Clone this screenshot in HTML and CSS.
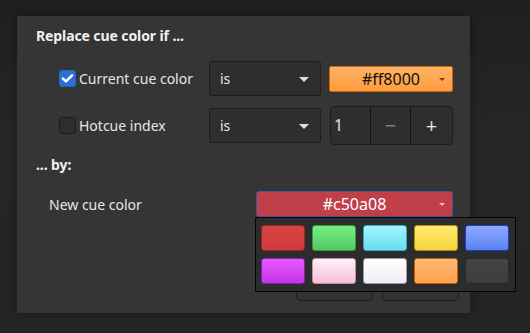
FILE: index.html
```html
<!DOCTYPE html>
<html>
<head>
<meta charset="utf-8">
<link rel="stylesheet" href="styles.css">
</head>
<body>
<div class="dialog">
  <div class="heading">Replace cue color if ...</div>
  <div class="cond">
    <div class="row">
      <label class="check"><span class="box on"><svg width="13" height="11" viewBox="0 0 13 11"><path d="M2 5.6 L5 8.4 L11 2.4" fill="none" stroke="#fff" stroke-width="2.6" stroke-linecap="round" stroke-linejoin="round"/></svg></span>Current cue color</label>
      <div class="combo">is<span class="arrow"></span></div>
      <div class="colorbtn orange">#ff8000<span class="sarrow"></span></div>
    </div>
    <div class="row">
      <label class="check"><span class="box"></span>Hotcue index</label>
      <div class="combo">is<span class="arrow"></span></div>
      <div class="spin"><span class="val">1</span><span class="sb minus">−</span><span class="sb plus">+</span></div>
    </div>
  </div>
  <div class="heading by">... by:</div>
  <div class="newrow">
    <span class="lbl">New cue color</span>
    <div class="picker">
      <div class="colorbtn red">#c50a08<span class="sarrow light"></span></div>
      <div class="popup">
        <span class="sw c1"></span><span class="sw c2"></span><span class="sw c3"></span><span class="sw c4"></span><span class="sw c5"></span>
        <span class="sw c6"></span><span class="sw c7"></span><span class="sw c8"></span><span class="sw c9"></span><span class="sw c10"></span>
      </div>
    </div>
  </div>
  <div class="footer"><span class="btn"></span><span class="btn"></span></div>
</div>
</body>
</html>
```

FILE: styles.css
```css
html, body { margin: 0; padding: 0; }
body {
  width: 530px; height: 333px; overflow: hidden;
  background: linear-gradient(#1f1f1f, #262626 40%, #242424);
  font-family: "Noto Sans", "Open Sans", sans-serif;
  color: #e6e6e6;
}
.dialog {
  position: relative;
  margin: 16px 0 0 17px;
  width: 453px; height: 297px;
  box-sizing: border-box;
  background: #353535;
  box-shadow: 0 0 10px rgba(0,0,0,.35);
  padding: 8px 17px 0 19px;
}
.heading { font-size: 14px; font-weight: 700; line-height: 24px; height: 24px; color: #f0f0f0; letter-spacing: -0.1px; }
.cond { display: flex; flex-direction: column; gap: 10px; margin: 13px 0 0 23px; }
.row { display: grid; grid-template-columns: 142px 112px 124px; column-gap: 8px; align-items: center; height: 35px; }
.check { display: flex; align-items: center; font-size: 14px; gap: 3px; }
.box {
  width: 17px; height: 17px; box-sizing: border-box; border-radius: 3px;
  border: 1px solid #1b1b1b; background: #2d2d2d;
  display: flex; align-items: center; justify-content: center;
}
.box.on { background: #2a6fd6; border-color: #2a63b8; }
.combo {
  position: relative; height: 35px; box-sizing: border-box;
  border: 1px solid #1d1d1d; border-radius: 3px; background: #2e2e2e;
  font-size: 14px; line-height: 33px; padding-left: 10px;
}
.arrow {
  position: absolute; right: 11px; top: 15px;
  width: 0; height: 0;
  border-left: 5px solid transparent; border-right: 5px solid transparent;
  border-top: 5px solid #e0e0e0;
}
.colorbtn {
  position: relative; height: 26px; box-sizing: border-box; border-radius: 2px;
  text-align: center; font-size: 16px; line-height: 24px;
}
.orange {
  background: linear-gradient(#ffb366, #ff9b3c);
  border: 1px solid #c9680e; color: #111;
}
.sarrow {
  position: absolute; right: 7px; top: 11px; width: 0; height: 0;
  border-left: 3px solid transparent; border-right: 3px solid transparent;
  border-top: 3px solid #6b4521;
}
.sarrow.light { border-top-color: #f0c0c4; }
.spin {
  justify-self: end; width: 123px; height: 39px; box-sizing: border-box;
  border: 1px solid #1d1d1d; border-radius: 4px; background: #2e2e2e;
  display: grid; grid-template-columns: 39px 40px 1fr;
  font-size: 16px; line-height: 37px;
}
.val { padding-left: 3px; color: #e4e4e4; }
.sb { border-left: 1px solid #141414; text-align: center; font-size: 20px; }
.minus { color: #7d7d7d; }
.plus { color: #e4e4e4; }
.by { margin-top: 12px; }
.newrow { display: flex; align-items: center; margin-top: 14px; padding-left: 13px; }
.lbl { font-size: 14px; width: 207px; }
.picker { position: relative; width: 197px; }
.red {
  background: #c03f49; border: 1px solid #3d5a94; color: #fff; border-radius: 3px;
}
.popup {
  position: absolute; left: -1px; top: 26px; z-index: 2;
  width: 261px; box-sizing: border-box;
  background: #2c2c2c; border: 1px solid #050505;
  padding: 7px 6px 7px 5px;
  display: grid; grid-template-columns: repeat(5, 44px); gap: 7px;
}
.sw { height: 26px; box-sizing: border-box; border-radius: 3px; border: 1px solid; }
.c1 { background: linear-gradient(#d84444, #d03a3a); border-color: #9a2424; }
.c2 { background: linear-gradient(#74f082, #54c862); border-color: #389a46; }
.c3 { background: linear-gradient(#a0f4ff, #68dcf2); border-color: #36a8c2; }
.c4 { background: linear-gradient(#ffe870, #f6d43a); border-color: #b0920c; }
.c5 { background: linear-gradient(#8eaaff, #5a82f6); border-color: #1f3fc0; }
.c6 { background: linear-gradient(#e458ff, #c436e6); border-color: #8a1eae; }
.c7 { background: linear-gradient(#fff0f8, #f6bedc); border-color: #c08ca6; }
.c8 { background: linear-gradient(#ffffff, #eeeef6); border-color: #9a9aa2; }
.c9 { background: linear-gradient(#ffba74, #ffa04e); border-color: #c0600e; }
.c10 { background: linear-gradient(#454545, #3c3c3c); border-color: #282828; }
.footer { position: absolute; right: 11px; bottom: 12px; display: flex; gap: 9px; }
.btn { width: 77px; height: 30px; box-sizing: border-box; border: 1px solid #1d1d1d; border-radius: 4px; background: #333; }
```
